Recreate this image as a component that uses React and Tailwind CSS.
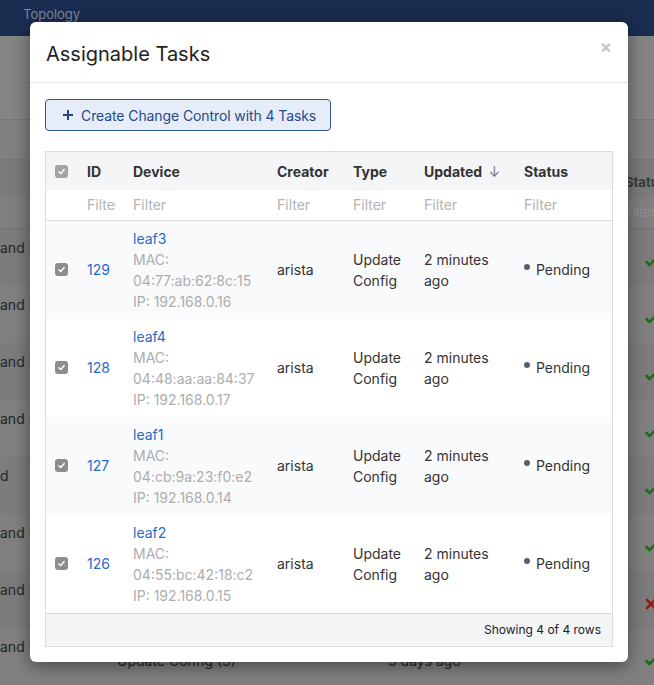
import React from "react";

const TASKS = [
  { id: 129, device: "leaf3", mac: "04:77:ab:62:8c:15", ip: "192.168.0.16" },
  { id: 128, device: "leaf4", mac: "04:48:aa:aa:84:37", ip: "192.168.0.17" },
  { id: 127, device: "leaf1", mac: "04:cb:9a:23:f0:e2", ip: "192.168.0.14" },
  { id: 126, device: "leaf2", mac: "04:55:bc:42:18:c2", ip: "192.168.0.15" },
];

// rows of the page behind the dimmed overlay
const BG_ROWS = ["and", "and", "and", "and", "d", "and", "and", "and"];
const BG_MARKS = ["ok", "ok", "ok", "ok", "ok", "ok", "fail", "ok"];

function Checkbox({ light }) {
  return (
    <div
      className={`h-[13px] w-[13px] rounded-[3px] flex items-center justify-center ${
        light ? "bg-[#a3a3a3]" : "bg-[#8d8d8d]"
      }`}
    >
      <svg width="9" height="9" viewBox="0 0 10 10">
        <path d="M2 5.2 L4.2 7.3 L8 2.8" fill="none" stroke="#fff" strokeWidth="1.6" strokeLinecap="round" strokeLinejoin="round" />
      </svg>
    </div>
  );
}

function Mark({ type }) {
  if (type === "fail") {
    return (
      <svg width="12" height="12" viewBox="0 0 12 12">
        <path d="M2 2 L10 10 M10 2 L2 10" stroke="#8f1d14" strokeWidth="2.6" strokeLinecap="round" />
      </svg>
    );
  }
  return (
    <svg width="12" height="12" viewBox="0 0 12 12">
      <path d="M1.5 6 L4.5 9 L10.5 3" fill="none" stroke="#1f6b1f" strokeWidth="2.6" strokeLinecap="round" strokeLinejoin="round" />
    </svg>
  );
}

function Background() {
  return (
    <div className="absolute inset-0 flex flex-col bg-[#7f7f7f]">
      <div className="h-[36px] bg-[#1a2c50] px-[23px] pt-[5px] text-[13px] text-[#7f889b] shrink-0">
        Topology
      </div>
      <div className="h-[84px] bg-[#858585] border-b border-[#787878] shrink-0" />
      <div className="h-[40px] bg-[#808080] border-b border-[#777777] shrink-0" />
      <div className="h-[37px] bg-[#7b7b7b] flex items-center justify-end shrink-0">
        <span className="mt-[9px] text-[13px] font-bold text-[#3a3a3a] w-[29px] overflow-hidden whitespace-nowrap">
          Status
        </span>
      </div>
      <div className="h-[32px] bg-[#7f7f7f] border-b border-[#727272] flex items-center justify-end shrink-0">
        <span className="text-[13px] text-[#8f8f8f] w-[29px] overflow-hidden whitespace-nowrap">Filter</span>
      </div>
      {BG_ROWS.map((w, i) => (
        <div
          key={i}
          className={`h-[57px] flex items-center justify-between shrink-0 ${
            i % 2 === 0 ? "bg-[#7c7c7c]" : "bg-[#808080]"
          }`}
        >
          <span className="text-[14px] text-[#262626] -mt-[21px]">{w}</span>
          <span className="mt-[9px] -mr-[3px]">
            <Mark type={BG_MARKS[i]} />
          </span>
        </div>
      ))}
      <span className="absolute left-[117px] top-[650px] text-[14px] text-[#262626]">Update Config (3)</span>
      <span className="absolute left-[388px] top-[650px] text-[14px] text-[#262626]">3 days ago</span>
    </div>
  );
}

export default function App() {
  return (
    <div
      className="relative w-[654px] h-[685px] overflow-hidden"
      style={{ fontFamily: "Inter, 'Liberation Sans', sans-serif" }}
    >
      <Background />

      <div className="absolute left-[30px] top-[22px] w-[598px] h-[640px] bg-white rounded-[6px] shadow-[0_4px_18px_rgba(0,0,0,0.45)] flex flex-col">
        <div className="h-[61px] border-b border-[#e5e5e5] flex items-center justify-between pl-[16px] pr-[16px] shrink-0">
          <h2 className="text-[20px] text-[#222] pt-[3px]">Assignable Tasks</h2>
          <span className="text-[18px] font-bold text-[#c8c8c8] -mt-[11px]">×</span>
        </div>

        <div className="px-[15px] pt-[16px] pb-[16px] flex flex-col">
          <button className="self-start h-[32px] pl-[16px] pr-[14px] flex items-center gap-[7px] bg-[#e6edf8] border border-[#2f5597] rounded-[4px] text-[14px] tracking-[-0.1px] text-[#27498a]">
            <svg width="12" height="12" viewBox="0 0 12 12">
              <path d="M6 1 V11 M1 6 H11" stroke="#27498a" strokeWidth="2" />
            </svg>
            Create Change Control with 4 Tasks
          </button>

          <div className="mt-[20px] border border-[#dcdcdc]">
            <table className="w-full table-fixed text-[14px] text-[#333] border-collapse">
              <colgroup>
                <col className="w-[31px]" />
                <col className="w-[46px]" />
                <col className="w-[144px]" />
                <col className="w-[76px]" />
                <col className="w-[71px]" />
                <col className="w-[100px]" />
                <col />
              </colgroup>
              <thead>
                <tr className="h-[38px] bg-[#f4f5f7] font-bold text-left">
                  <th className="pl-[9px]">
                    <Checkbox light />
                  </th>
                  <th className="pl-[10px] font-bold">ID</th>
                  <th className="pl-[10px] font-bold">Device</th>
                  <th className="pl-[10px] font-bold">Creator</th>
                  <th className="pl-[10px] font-bold">Type</th>
                  <th className="pl-[10px] font-bold whitespace-nowrap">
                    Updated <span className="font-normal text-[#777] ml-[3px]">↓</span>
                  </th>
                  <th className="pl-[10px] font-bold">Status</th>
                </tr>
                <tr className="h-[30px] border-b border-[#dcdcdc]">
                  <td />
                  <td className="pl-[10px]">
                    <input
                      placeholder="Filter"
                      className="w-[29px] bg-transparent text-[14px] placeholder-[#b3b3b3] outline-none"
                    />
                  </td>
                  {["Device", "Creator", "Type", "Updated", "Status"].map((c) => (
                    <td key={c} className="pl-[10px] pr-[2px]">
                      <input
                        placeholder="Filter"
                        className="w-full bg-transparent text-[14px] placeholder-[#b3b3b3] outline-none"
                      />
                    </td>
                  ))}
                </tr>
              </thead>
              <tbody>
                {TASKS.map((t, i) => (
                  <tr key={t.id} className={`h-[98px] ${i % 2 === 0 ? "bg-[#f9fafb]" : "bg-white"}`}>
                    <td className="pl-[9px]">
                      <Checkbox />
                    </td>
                    <td className="pl-[10px] text-[#2a6bc6]">{t.id}</td>
                    <td className="pl-[10px] leading-[21px] py-[7px]">
                      <div className="text-[#2a6bc6]">{t.device}</div>
                      <div className="text-[#adadad]">MAC:</div>
                      <div className="text-[#adadad] whitespace-nowrap">{t.mac}</div>
                      <div className="text-[#adadad] whitespace-nowrap">IP: {t.ip}</div>
                    </td>
                    <td className="pl-[10px]">arista</td>
                    <td className="pl-[10px] leading-[21px]">
                      Update
                      <br />
                      Config
                    </td>
                    <td className="pl-[10px] leading-[21px]">
                      2 minutes
                      <br />
                      ago
                    </td>
                    <td className="pl-[10px]">
                      <div className="flex items-center gap-[6px]">
                        <span className="h-[6px] w-[6px] rounded-full bg-[#56606d] -mt-[5px]" />
                        Pending
                      </div>
                    </td>
                  </tr>
                ))}
              </tbody>
            </table>
            <div className="h-[33px] bg-[#f4f5f7] border-t border-[#dcdcdc] flex items-center justify-end pr-[11px] text-[12px] text-[#222]">
              Showing 4 of 4 rows
            </div>
          </div>
        </div>
      </div>
    </div>
  );
}
